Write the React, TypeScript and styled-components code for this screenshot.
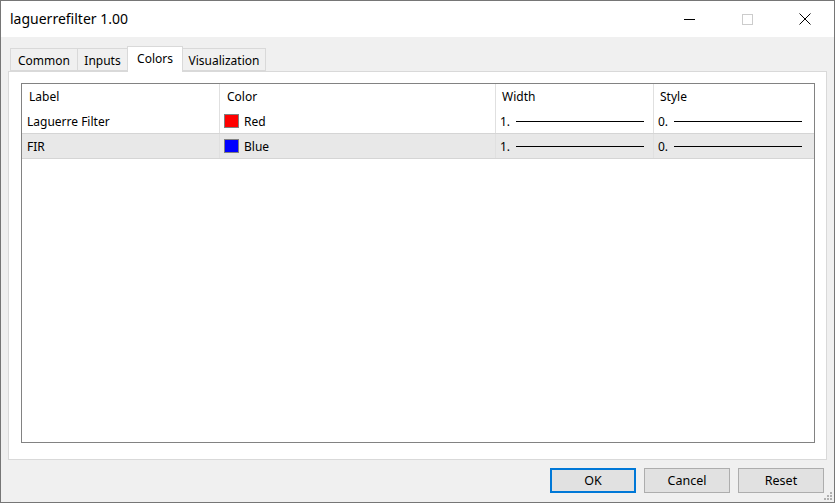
import React from "react";
import styled, { createGlobalStyle } from "styled-components";

const GlobalStyle = createGlobalStyle`
  html, body {
    margin: 0;
    padding: 0;
    background: #ffffff;
  }
  body {
    font-family: "Noto Sans", "Open Sans", sans-serif;
    font-size: 12px;
    color: #000;
  }
`;

const Window = styled.div`
  width: 835px;
  height: 503px;
  box-sizing: border-box;
  border: 1px solid #767676;
  display: flex;
  flex-direction: column;
  background: #f0f0f0;
  overflow: hidden;
`;

const TitleBar = styled.div`
  height: 36px;
  flex: none;
  background: #fff;
  display: flex;
  align-items: center;
`;

const Title = styled.div`
  flex: 1;
  padding-left: 9px;
  font-size: 14px;
  color: #000;
  padding-bottom: 2px;
`;

const CaptionButton = styled.div`
  width: 58px;
  height: 36px;
  display: flex;
  align-items: center;
  justify-content: center;
`;

const Body = styled.div`
  flex: 1;
  display: flex;
  flex-direction: column;
  padding: 9px 7px 0 7px;
`;

const TabStrip = styled.div`
  display: flex;
  align-items: flex-end;
  height: 25px;
  padding-left: 3px;
  position: relative;
  z-index: 1;
`;

const Tab = styled.div<{ $active?: boolean; $w: number }>`
  width: ${(p) => p.$w}px;
  box-sizing: border-box;
  height: ${(p) => (p.$active ? 26 : 23)}px;
  margin-bottom: ${(p) => (p.$active ? -1 : 0)}px;
  border: 1px solid #d9d9d9;
  border-bottom: ${(p) => (p.$active ? "none" : "1px solid #d9d9d9")};
  margin-left: -1px;
  background: ${(p) => (p.$active ? "#fff" : "#f0f0f0")};
  display: flex;
  align-items: center;
  justify-content: center;
  padding-top: ${(p) => (p.$active ? 0 : 1)}px;
  padding-bottom: ${(p) => (p.$active ? 3 : 0)}px;
`;

const Panel = styled.div`
  width: 819px;
  height: 389px;
  box-sizing: border-box;
  border: 1px solid #d9d9d9;
  background: #fff;
  padding: 11px 0 0 12px;
`;

const ListView = styled.div`
  width: 794px;
  height: 360px;
  box-sizing: border-box;
  border: 1px solid #828282;
  background: #fff;
`;

const Row = styled.div<{ $alt?: boolean; $header?: boolean }>`
  display: grid;
  grid-template-columns: 197px 276px 158px 161px;
  height: ${(p) => (p.$header ? 25 : 24)}px;
  background: ${(p) => (p.$alt ? "#e8e8e8" : "#fff")};
  border-top: ${(p) => (p.$alt ? "1px solid #d5d5d5" : "none")};
  border-bottom: ${(p) => (p.$alt ? "1px solid #d5d5d5" : "none")};
`;

const Cell = styled.div<{ $first?: boolean; $pad?: number }>`
  display: flex;
  align-items: center;
  gap: 5px;
  padding-left: ${(p) => p.$pad ?? 5}px;
  border-left: ${(p) => (p.$first ? "none" : "1px solid #e0e0e0")};
  white-space: nowrap;
  overflow: hidden;
`;

const Swatch = styled.span<{ $color: string }>`
  width: 15px;
  height: 14px;
  box-sizing: border-box;
  border: 1px solid #808080;
  background: ${(p) => p.$color};
  flex: none;
`;

const LineSample = styled.span`
  width: 128px;
  height: 1px;
  background: #000;
  margin-left: 1px;
  margin-top: 1px;
`;

const Footer = styled.div`
  display: flex;
  justify-content: flex-end;
  gap: 8px;
  padding: 8px 3px 0 0;
  position: relative;
  flex: 1;
`;

const Button = styled.div<{ $default?: boolean }>`
  width: 86px;
  height: 25px;
  box-sizing: border-box;
  background: #e1e1e1;
  border: ${(p) => (p.$default ? "2px solid #0078d7" : "1px solid #adadad")};
  display: flex;
  align-items: center;
  justify-content: center;
  font-size: 12.5px;
`;

const Grip = styled.svg`
  position: absolute;
  right: -6px;
  bottom: 1px;
`;

const rows = [
  { label: "Laguerre Filter", color: "#ff0000", name: "Red" },
  { label: "FIR", color: "#0000ff", name: "Blue" },
];

export default function App() {
  return (
    <>
      <GlobalStyle />
      <Window>
        <TitleBar>
          <Title>laguerrefilter 1.00</Title>
          <CaptionButton>
            <svg width="11" height="11" viewBox="0 0 11 11">
              <line x1="0" y1="5.5" x2="11" y2="5.5" stroke="#000" strokeWidth="1" />
            </svg>
          </CaptionButton>
          <CaptionButton>
            <svg width="11" height="11" viewBox="0 0 11 11">
              <rect x="0.5" y="0.5" width="10" height="10" fill="none" stroke="#cccccc" strokeWidth="1" />
            </svg>
          </CaptionButton>
          <CaptionButton>
            <svg width="12" height="12" viewBox="0 0 12 12">
              <path d="M0.5 0.5 L11.5 11.5 M11.5 0.5 L0.5 11.5" stroke="#000" strokeWidth="1" />
            </svg>
          </CaptionButton>
        </TitleBar>
        <Body>
          <TabStrip>
            <Tab $w={68}>Common</Tab>
            <Tab $w={51}>Inputs</Tab>
            <Tab $w={56} $active>
              Colors
            </Tab>
            <Tab $w={84}>Visualization</Tab>
          </TabStrip>
          <Panel>
            <ListView>
              <Row $header>
                <Cell $first $pad={7}>Label</Cell>
                <Cell $pad={7}>Color</Cell>
                <Cell $pad={6}>Width</Cell>
                <Cell $pad={6}>Style</Cell>
              </Row>
              {rows.map((r, i) => (
                <Row key={r.label} $alt={i === 1}>
                  <Cell $first $pad={5}>{r.label}</Cell>
                  <Cell $pad={4}>
                    <Swatch $color={r.color} />
                    {r.name}
                  </Cell>
                  <Cell $pad={4}>
                    1.
                    <LineSample />
                  </Cell>
                  <Cell $pad={4}>
                    0.
                    <LineSample />
                  </Cell>
                </Row>
              ))}
            </ListView>
          </Panel>
          <Footer>
            <Button $default>OK</Button>
            <Button>Cancel</Button>
            <Button>Reset</Button>
            <Grip width="9" height="9" viewBox="0 0 9 9">
              <g fill="#b0b0b0">
                <rect x="6" y="0" width="2" height="2" />
                <rect x="3" y="3" width="2" height="2" />
                <rect x="6" y="3" width="2" height="2" />
                <rect x="0" y="6" width="2" height="2" />
                <rect x="3" y="6" width="2" height="2" />
                <rect x="6" y="6" width="2" height="2" />
              </g>
            </Grip>
          </Footer>
        </Body>
      </Window>
    </>
  );
}
